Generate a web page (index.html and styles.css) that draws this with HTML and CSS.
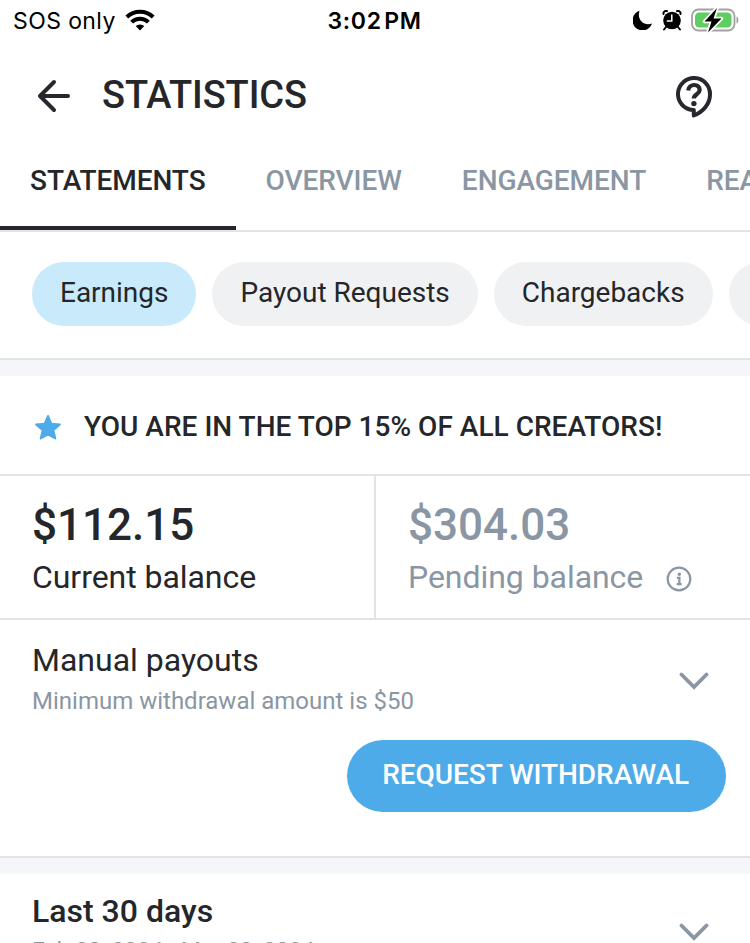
FILE: index.html
```html
<!DOCTYPE html>
<html lang="en">
<head>
    <meta charset="UTF-8">
    <meta name="viewport" content="width=device-width, initial-scale=1.0">
    <title>Statistics</title>
    <link rel="stylesheet" href="styles.css">
</head>
<body>
    <div class="screen">
        <!-- Phone status bar -->
        <div class="status-bar">
            <div class="status-left">
                <span class="carrier">SOS only</span>
                <svg class="wifi" width="30" height="22" viewBox="0 0 30 22">
                    <path d="M15 21.5l4.3-4.4a6.3 6.3 0 0 0-8.6 0z" fill="#000"/>
                    <path d="M6.6 13.1a12 12 0 0 1 16.8 0" fill="none" stroke="#000" stroke-width="4"/>
                    <path d="M1.8 8a19 19 0 0 1 26.4 0" fill="none" stroke="#000" stroke-width="4"/>
                </svg>
            </div>
            <span class="time">3:02 PM</span>
            <div class="status-right">
                <svg width="20" height="20" viewBox="0 0 20 20">
                    <path d="M6.5 0.8A10 10 0 1 0 19 13.4C11.5 16.5 3.5 10 6.5 0.8z" fill="#000"/>
                </svg>
                <svg class="alarm" width="20" height="21" viewBox="0 0 20 21">
                    <circle cx="10" cy="10.5" r="8.8" fill="#000"/>
                    <path d="M1.5 4a2.5 2.5 0 0 1 3.5-2.8M18.5 4a2.5 2.5 0 0 0-3.5-2.8" stroke="#000" stroke-width="2" fill="none" stroke-linecap="round"/>
                    <path d="M4 17l-2 2.5M16 17l2 2.5" stroke="#000" stroke-width="2" stroke-linecap="round"/>
                    <path d="M9.8 5v6H5.3" stroke="#fff" stroke-width="1.5" fill="none" stroke-linecap="round"/>
                </svg>
                <svg class="battery" width="48" height="26" viewBox="0 0 48 26">
                    <rect x="1" y="2.5" width="42.5" height="21" rx="6.5" fill="none" stroke="#a2a2a4" stroke-width="1.8"/>
                    <rect x="4" y="5.4" width="36.5" height="15.2" rx="4.2" fill="#5fce60"/>
                    <path d="M45.5 9.5c2.6 1.2 2.6 6 0 7.2z" fill="#a2a2a4"/>
                    <path d="M26 1L13.5 14.5h7L17 25.5l13.5-14h-8z" fill="#000" stroke="#fff" stroke-width="3.5" paint-order="stroke" stroke-linejoin="round"/>
                </svg>
            </div>
        </div>

        <header class="page-header">
            <svg class="back" width="34" height="34" viewBox="0 0 34 34">
                <path d="M18 3L4 17l14 14M4.5 17H32" fill="none" stroke="#26282e" stroke-width="4" stroke-linecap="round" stroke-linejoin="round"/>
            </svg>
            <h1>STATISTICS</h1>
            <svg class="help" width="40" height="44" viewBox="0 0 40 44">
                <path d="M18.8 36A16 16 0 1 1 36 20.5C36 30 29 38 19.8 41.5V36z" fill="none" stroke="#26282e" stroke-width="4" stroke-linejoin="round"/>
                <path d="M14.2 16.5c.5-7.5 12-7 11.5-.3-.4 4.2-5.7 3.8-5.9 8.3" fill="none" stroke="#26282e" stroke-width="4.2"/>
                <circle cx="19.9" cy="29.6" r="2.7" fill="#26282e"/>
            </svg>
        </header>

        <nav class="tabs">
            <a class="tab active">STATEMENTS</a>
            <a class="tab">OVERVIEW</a>
            <a class="tab">ENGAGEMENT</a>
            <a class="tab">REACH</a>
        </nav>

        <div class="chips">
            <button class="chip active">Earnings</button>
            <button class="chip">Payout Requests</button>
            <button class="chip">Chargebacks</button>
            <button class="chip">Referrals</button>
        </div>

        <div class="rank">
            <svg width="28" height="27" viewBox="0 0 28 27">
                <path d="M14 3l3.2 7.7 8.7.8-6.6 5.7 2 8.3L14 21.3 6.7 25.5l2-8.3L2.1 11.5l8.7-.8z" fill="#4dabe9" stroke="#4dabe9" stroke-width="2" stroke-linejoin="round"/>
            </svg>
            <span>YOU ARE IN THE TOP 15% OF ALL CREATORS!</span>
        </div>

        <div class="balances">
            <div class="balance">
                <div class="amount">$112.15</div>
                <div class="caption">Current balance</div>
            </div>
            <div class="balance pending">
                <div class="amount">$304.03</div>
                <div class="caption">
                    <span>Pending balance</span>
                    <svg width="26" height="26" viewBox="0 0 26 26">
                        <circle cx="13" cy="13" r="11.3" fill="none" stroke="#8a96a3" stroke-width="2.2"/>
                        <circle cx="13.3" cy="8.3" r="1.7" fill="#8a96a3"/>
                        <path d="M10.8 11.8h2.6v6.2M10.7 18.2h5" fill="none" stroke="#8a96a3" stroke-width="2.2"/>
                    </svg>
                </div>
            </div>
        </div>

        <section class="payouts">
            <div class="row">
                <div>
                    <h2>Manual payouts</h2>
                    <p>Minimum withdrawal amount is $50</p>
                </div>
                <svg class="chevron" width="30" height="20" viewBox="0 0 30 20">
                    <path d="M2.5 2.5L15 15 27.5 2.5" fill="none" stroke="#8a96a3" stroke-width="3.8" stroke-linecap="round"/>
                </svg>
            </div>
            <button class="withdraw">REQUEST WITHDRAWAL</button>
        </section>

        <section class="period">
            <div class="row">
                <div>
                    <h2>Last 30 days</h2>
                    <p>Feb 20, 2024 - Mar 20, 2024</p>
                </div>
                <svg class="chevron" width="30" height="20" viewBox="0 0 30 20">
                    <path d="M2.5 2.5L15 15 27.5 2.5" fill="none" stroke="#8a96a3" stroke-width="3.8" stroke-linecap="round"/>
                </svg>
            </div>
        </section>
    </div>
</body>
</html>
```
FILE: styles.css
```css
* {
    margin: 0;
    padding: 0;
    box-sizing: border-box;
}

body {
    font-family: Roboto, sans-serif;
    color: #242629;
    background: #f4f6f9;
}

svg {
    display: block;
    flex-shrink: 0;
}

.screen {
    height: 943px;
    overflow: hidden;
}

/* Status bar */
.status-bar {
    display: grid;
    grid-template-columns: 1fr auto 1fr;
    height: 48px;
    padding: 0 11px 8px 13px;
    align-items: center;
    background: #fff;
    font-family: Inter, sans-serif;
    font-size: 23px;
    color: #000;
}

.status-left,
.status-right {
    display: flex;
    align-items: center;
}

.status-left {
    gap: 9px;
}

.carrier {
    padding-top: 1px;
    letter-spacing: 0.4px;
}

.time {
    padding: 1px 3px 0 0;
    font-weight: 600;
    letter-spacing: 0.7px;
    word-spacing: -4px;
}

.status-right {
    justify-content: flex-end;
}

.alarm {
    margin: 0 9px 0 9px;
}

/* Header */
.page-header {
    display: flex;
    align-items: center;
    height: 96px;
    padding: 0 36px;
    background: #fff;
}

.page-header h1 {
    flex: 1;
    margin: 0 0 3px 32px;
    font-size: 38px;
    font-weight: 500;
    letter-spacing: -0.1px;
}

/* Tabs */
.tabs {
    display: flex;
    height: 88px;
    background: #fff;
    border-bottom: 2px solid #e2e3e6;
    overflow: hidden;
}

.tab {
    flex-shrink: 0;
    padding: 20px 30px 0;
    font-size: 28px;
    line-height: 33px;
    font-weight: 500;
    letter-spacing: -0.05px;
    color: #8a96a3;
}

.tab.active {
    color: #242629;
    border-bottom: 4px solid #26262f;
}

/* Filter chips */
.chips {
    display: flex;
    gap: 16px;
    height: 128px;
    padding: 30px 0 0 32px;
    background: #fff;
    border-bottom: 2px solid #e2e3e6;
    overflow: hidden;
}

.chip {
    flex-shrink: 0;
    height: 64px;
    padding: 0 28px 3px;
    border: none;
    border-radius: 32px;
    background: #f0f1f3;
    font-family: inherit;
    font-size: 28px;
    letter-spacing: -0.01px;
    color: #242629;
}

.chip.active {
    background: #c8eafa;
}

/* Creator rank */
.rank {
    display: flex;
    align-items: center;
    gap: 22px;
    height: 100px;
    margin-top: 16px;
    padding: 2px 34px 0;
    background: #fff;
    border-bottom: 2px solid #e2e3e6;
    font-size: 28px;
    font-weight: 500;
    letter-spacing: 0.02px;
}

/* Balances */
.balances {
    display: grid;
    grid-template-columns: 376px 1fr;
    height: 144px;
    background: #fff;
    border-bottom: 2px solid #e2e3e6;
}

.balance {
    padding: 22px 32px 0;
    border-right: 2px solid #e2e3e6;
}

.balance.pending {
    border-right: none;
    color: #8a96a3;
}

.amount {
    font-size: 44px;
    line-height: 54px;
    font-weight: 500;
}

.caption {
    display: flex;
    align-items: center;
    gap: 23px;
    font-size: 32px;
    line-height: 50px;
    letter-spacing: -0.05px;
}

.caption svg {
    margin-top: 4px;
}

/* Payouts */
.payouts {
    height: 238px;
    padding: 20px 24px 0 32px;
    background: #fff;
    border-bottom: 2px solid #e2e3e6;
}

.row {
    display: flex;
    justify-content: space-between;
    align-items: center;
}

.row h2 {
    font-size: 32px;
    line-height: 40px;
    font-weight: 400;
}

.row p {
    font-size: 24px;
    line-height: 42px;
    color: #8a96a3;
}

.chevron {
    margin-top: 2px;
}

.payouts .chevron {
    margin-right: 17px;
}

.withdraw {
    display: block;
    height: 72px;
    margin: 18px 0 0 auto;
    padding: 0 37px 3px 35.5px;
    border: none;
    border-radius: 36px;
    background: #4dabe9;
    font-family: inherit;
    font-size: 28px;
    font-weight: 500;
    letter-spacing: -0.05px;
    color: #fff;
}

/* Statement period */
.period {
    height: 120px;
    margin-top: 16px;
    padding: 17px 41px 0 32px;
    background: #fff;
}

.period h2 {
    font-weight: 500;
}

.period p {
    font-size: 23px;
    line-height: 41px;
}

.period .chevron {
    margin-top: 3px;
}
```
